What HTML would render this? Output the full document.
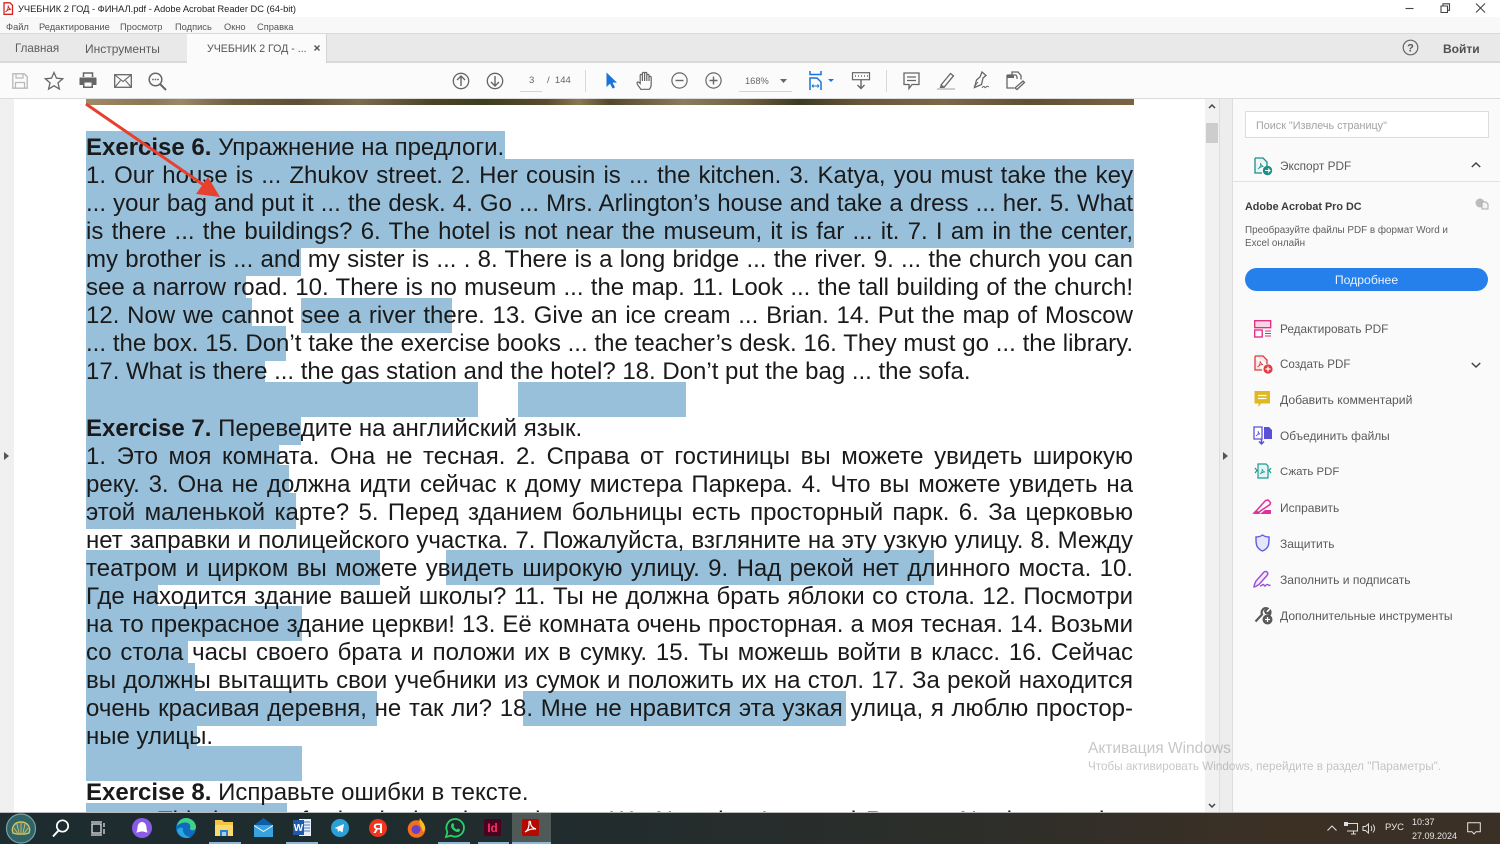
<!DOCTYPE html>
<html lang="ru"><head><meta charset="utf-8"><title>Acrobat Reader</title>
<style>
html,body{margin:0;padding:0;width:1500px;height:844px;overflow:hidden;background:#fff;font-family:"Liberation Sans","Noto Sans CJK SC",sans-serif}
.a{position:absolute}
.t{position:absolute;white-space:nowrap;line-height:14px;height:14px}
.h{position:absolute;background:#99c0db}
.l{position:absolute;left:86px;width:1047px;height:28px;line-height:28px;font-size:24px;color:#1a1a1a;font-family:"Liberation Sans",Arial,sans-serif;text-align:justify;text-align-last:justify;overflow:visible}
.n{text-align:left;text-align-last:left;white-space:nowrap}
svg{position:absolute;overflow:visible}
.m{font-size:9.3px;color:#555;top:20px}
.tool{font-size:12px;color:#5a5a5a;left:1280px}
</style></head><body>

<!-- title bar -->
<div class="a" style="left:0;top:0;width:1500px;height:17px;background:#fff"></div>
<svg style="left:2px;top:2px" width="12" height="13" viewBox="0 0 12 13"><path d="M2 .8h6l2.500 2.500v9H2z" fill="#fff" stroke="#d6231e" stroke-width="1.300"/><path d="M3.500 10c2-1 3-4 2.600-6.500 .5 2.500 1.500 3.500 3 4-2-.2-4 .6-5.600 2.500z" fill="none" stroke="#d6231e" stroke-width=".9"/></svg>
<div class="t" style="left:18px;top:2px;font-size:9.300px;color:#222">УЧЕБНИК 2 ГОД - ФИНАЛ.pdf - Adobe Acrobat Reader DC (64-bit)</div>
<svg style="left:1400px;top:0" width="100" height="17" viewBox="0 0 100 17"><path d="M5.500 8.500h8" stroke="#444" stroke-width="1.100"/><path d="M41 6h6.500v6.500H41zM43 6V3.800h6.500v6.500H47.500" fill="none" stroke="#444" stroke-width="1.100"/><path d="M76 3.500l9 9M85 3.500l-9 9" stroke="#444" stroke-width="1.100"/></svg>

<!-- menu -->
<div class="a" style="left:0;top:17px;width:1500px;height:16px;background:#f8f8f8"></div>
<div class="t m" style="left:6px">Файл</div>
<div class="t m" style="left:39px">Редактирование</div>
<div class="t m" style="left:120px">Просмотр</div>
<div class="t m" style="left:175px">Подпись</div>
<div class="t m" style="left:224px">Окно</div>
<div class="t m" style="left:257px">Справка</div>

<!-- tab bar -->
<div class="a" style="left:0;top:33px;width:1500px;height:29px;background:#e9e9e9;border-top:1px solid #dadada;box-sizing:border-box"></div>
<div class="a" style="left:0;top:61px;width:1500px;height:2px;background:#d9d9d9"></div>
<div class="a" style="left:187px;top:34px;width:140px;height:29px;background:#fbfbfb;border-right:1px solid #d4d4d4;box-sizing:border-box"></div>
<div class="t" style="left:15px;top:42px;font-size:11.600px;color:#5c5c5c">Главная</div>
<div class="t" style="left:85px;top:42px;font-size:12px;color:#5c5c5c">Инструменты</div>
<div class="t" style="left:207px;top:42px;font-size:10.600px;color:#555">УЧЕБНИК 2 ГОД - ...</div>
<svg style="left:314px;top:45px" width="6" height="6"><path d="M.5.500l5 5M5.500.500l-5 5" stroke="#555" stroke-width="1.400"/></svg>
<svg style="left:1402px;top:39px" width="17" height="17" viewBox="0 0 17 17"><circle cx="8.500" cy="8.500" r="7.300" fill="none" stroke="#666" stroke-width="1.200"/><text x="8.500" y="12.500" font-size="11" font-family="Liberation Sans" text-anchor="middle" fill="#555" font-weight="bold">?</text></svg>
<div class="t" style="left:1443px;top:42px;font-size:12px;font-weight:bold;color:#505050">Войти</div>

<!-- toolbar -->
<div class="a" style="left:0;top:63px;width:1500px;height:35px;background:#fbfbfb"></div>
<div class="a" style="left:0;top:98px;width:1500px;height:1px;background:#dcdcdc"></div>

<svg style="left:12px;top:73px" width="16" height="16" viewBox="0 0 16 16"><path d="M.8.800h11.500l2.900 2.900v11.500H.8z" fill="none" stroke="#b8b8b8" stroke-width="1.300"/><path d="M4 1v4h7V1M3.500 15V9.500h9V15" fill="none" stroke="#b8b8b8" stroke-width="1.200"/></svg>
<svg style="left:44px;top:71px" width="20" height="19" viewBox="0 0 20 19"><path d="M10 1.500l2.500 5.700 6.200.6-4.700 4.100 1.400 6.100L10 14.800l-5.400 3.200L6 11.900 1.300 7.800l6.200-.6z" fill="none" stroke="#666" stroke-width="1.300"/></svg>
<svg style="left:79px;top:72px" width="18" height="17" viewBox="0 0 18 17"><path d="M4.500 5V1h9v4" fill="none" stroke="#666" stroke-width="1.500"/><path d="M1 5.500h16a.8.800 0 0 1 .5.800v6.700h-3.500v3H4v-3H.5V6.300A.8.800 0 0 1 1 5.500z" fill="#666"/><rect x="5.500" y="10.500" width="7" height="4" fill="#fbfbfb"/></svg>
<svg style="left:114px;top:74px" width="18" height="14" viewBox="0 0 18 14"><rect x=".7" y=".7" width="16.600" height="12.600" fill="none" stroke="#666" stroke-width="1.300"/><path d="M1 1l8 6.500L17 1M1 13l5.500-6.500M17 13l-5.500-6.500" fill="none" stroke="#666" stroke-width="1.100"/></svg>
<svg style="left:148px;top:72px" width="19" height="19" viewBox="0 0 19 19"><circle cx="7.500" cy="7.500" r="6.300" fill="none" stroke="#666" stroke-width="1.500"/><path d="M12 12l6 6" stroke="#666" stroke-width="2"/><circle cx="5" cy="7.500" r=".9" fill="#666"/><circle cx="7.500" cy="7.500" r=".9" fill="#666"/><circle cx="10" cy="7.500" r=".9" fill="#666"/></svg>

<svg style="left:452px;top:72px" width="18" height="18" viewBox="0 0 18 18"><circle cx="9" cy="9" r="7.700" fill="none" stroke="#666" stroke-width="1.300"/><path d="M9 14V4.500M5 8l4-4 4 4" fill="none" stroke="#666" stroke-width="1.400"/></svg>
<svg style="left:486px;top:72px" width="18" height="18" viewBox="0 0 18 18"><circle cx="9" cy="9" r="7.700" fill="none" stroke="#666" stroke-width="1.300"/><path d="M9 4v9.500M5 10l4 4 4-4" fill="none" stroke="#666" stroke-width="1.400"/></svg>
<div class="t" style="left:529px;top:74px;font-size:9.500px;color:#666">3</div>
<div class="a" style="left:520px;top:91px;width:22px;height:1px;background:#d4d4d4"></div>
<div class="t" style="left:547px;top:74px;font-size:9.500px;color:#666">/&nbsp; 144</div>
<div class="a" style="left:585px;top:70px;width:1px;height:22px;background:#d8d8d8"></div>
<svg style="left:605px;top:72px" width="13" height="17" viewBox="0 0 13 17"><path d="M1.500.500v14.500l3.500-3.400 2.600 5 2.400-1.200-2.500-4.800H12z" fill="#1a73d9"/></svg>
<svg style="left:636px;top:71px" width="19" height="20" viewBox="0 0 19 20"><path d="M4.800 18.300c-1.200-2-3.800-4.700-3.800-6.300 0-1.500 1.700-1.300 3.200 .4V4.500a1.100 1.100 0 0 1 2.200 0V2.500a1.100 1.100 0 0 1 2.200 0v0a1.100 1.100 0 0 1 2.200 0v2a1.100 1.100 0 0 1 2.200 0v2a1.100 1.100 0 0 1 2.200 0v7c0 2-.9 3.700-1.800 4.800zM6.400 4v6M8.600 2.500V10M10.800 2.800V10M13 4.800V10" fill="none" stroke="#666" stroke-width="1.200"/></svg>
<svg style="left:671px;top:72px" width="17" height="17" viewBox="0 0 17 17"><circle cx="8.500" cy="8.500" r="7.600" fill="none" stroke="#666" stroke-width="1.200"/><path d="M4.500 8.500h8" stroke="#666" stroke-width="1.400"/></svg>
<svg style="left:705px;top:72px" width="17" height="17" viewBox="0 0 17 17"><circle cx="8.500" cy="8.500" r="7.600" fill="none" stroke="#666" stroke-width="1.200"/><path d="M4.500 8.500h8M8.500 4.500v8" stroke="#666" stroke-width="1.400"/></svg>
<div class="t" style="left:745px;top:74px;font-size:9.300px;color:#666">168%</div>
<svg style="left:780px;top:79px" width="7" height="4"><path d="M0 0h7L3.500 4z" fill="#666"/></svg>
<div class="a" style="left:739px;top:91px;width:53px;height:1px;background:#d4d4d4"></div>
<svg style="left:809px;top:71px" width="26" height="20" viewBox="0 0 26 20"><path d="M1 0v3.500h11V0M1 19V7h7l4 4v8" fill="none" stroke="#1a73d9" stroke-width="1.500"/><path d="M3 15h7M3 15l1.500-1.500M3 15l1.500 1.500M10 15l-1.500-1.500M10 15l-1.500 1.500" stroke="#1a73d9" stroke-width=".9" fill="none"/><path d="M19 8h6l-3 3z" fill="#1a73d9"/></svg>
<svg style="left:852px;top:72px" width="18" height="18" viewBox="0 0 18 18"><rect x=".5" y=".7" width="17" height="7" fill="none" stroke="#666" stroke-width="1.200"/><path d="M3 4h1M6 4h1M9 4h1M12 4h1M15 4h1" stroke="#666" stroke-width="1.400"/><path d="M9 8v8.500M5.500 13l3.500 3.500 3.500-3.500" fill="none" stroke="#666" stroke-width="1.400"/></svg>
<div class="a" style="left:886px;top:70px;width:1px;height:22px;background:#d8d8d8"></div>
<svg style="left:903px;top:72px" width="17" height="18" viewBox="0 0 17 18"><path d="M1 1h15v11.500H9l-3 4v-4H1z" fill="none" stroke="#666" stroke-width="1.300"/><path d="M4 5h9M4 8.500h9" stroke="#666" stroke-width="1.200"/></svg>
<svg style="left:937px;top:72px" width="18" height="18" viewBox="0 0 18 18"><path d="M4 13L13.500 1.500l3 2.300L7 15.300z" fill="none" stroke="#666" stroke-width="1.300"/><path d="M4 13l-1.500 3h4z" fill="#666"/><rect x="0" y="16" width="18" height="2" fill="#ccc"/></svg>
<svg style="left:971px;top:71px" width="19" height="19" viewBox="0 0 19 19"><path d="M11 1l4 3.500-3 2.500 -1.500 6.500-7 3 2-7.500L9 6z" fill="none" stroke="#666" stroke-width="1.300"/><path d="M3 16l4-5" stroke="#666"/><path d="M11 17c1-2 2-2 2.500-1s1 1 1.500 0 1.500-1 3 0" fill="none" stroke="#666"/></svg>
<svg style="left:1006px;top:71px" width="19" height="19" viewBox="0 0 19 19"><path d="M6 4V1h6l3 3.500v4M1 4h9l1 2v2M1 4v13h7" fill="none" stroke="#666" stroke-width="1.300"/><path d="M1 4h7v3H1z" fill="#666"/><path d="M9 17l8-7 1.500 1.500-7.500 7z" fill="none" stroke="#666" stroke-width="1.300"/></svg>

<!-- side gutters -->
<div class="a" style="left:0;top:99px;width:14px;height:714px;background:#f0f0f0"></div>
<svg style="left:4px;top:452px" width="5" height="8"><path d="M0 0l5 4-5 4z" fill="#555"/></svg>
<div class="a" style="left:14px;top:99px;width:1191px;height:714px;background:#fff"></div>

<!-- page image strip -->
<div class="a" style="left:86px;top:99px;width:1048px;height:5.500px;background:linear-gradient(90deg,#a08b68 0,#8a7553 6%,#9a8866 9%,#6e5f3f 14%,#5c4f35 20%,#7b6c4e 26%,#4d4427 33%,#3f3c1f 38%,#5a4c2d 44%,#8a7a52 47%,#54482c 50%,#8a7d5c 57%,#6e5f40 63%,#3d3a22 68%,#685738 74%,#7b6847 82%,#5e5030 90%,#7c6443 100%)"></div>

<!-- highlights -->
<div class="h" style="left:86px;top:131px;width:419px;height:28px"></div>
<div class="h" style="left:86px;top:159px;width:1047.500px;height:88.700px"></div>
<div class="h" style="left:86px;top:247px;width:215px;height:29px"></div>
<div class="h" style="left:86px;top:275.700px;width:159.500px;height:23px"></div>
<div class="h" style="left:86px;top:298px;width:166.400px;height:28px"></div>
<div class="h" style="left:301.400px;top:298.300px;width:151px;height:35px"></div>
<div class="h" style="left:86px;top:325.700px;width:200.300px;height:35px"></div>
<div class="h" style="left:86px;top:360.700px;width:179px;height:22px"></div>
<div class="h" style="left:86px;top:382px;width:392px;height:35px"></div>
<div class="h" style="left:518px;top:382px;width:167.500px;height:35px"></div>
<div class="h" style="left:86px;top:416.700px;width:214.600px;height:28.500px"></div>
<div class="h" style="left:86px;top:445px;width:193px;height:20.500px"></div>
<div class="h" style="left:86px;top:465px;width:203px;height:28.500px"></div>
<div class="h" style="left:86px;top:493px;width:210px;height:36px"></div>
<div class="h" style="left:86px;top:550px;width:294px;height:35px"></div>
<div class="h" style="left:446px;top:550px;width:488px;height:35px"></div>
<div class="h" style="left:86px;top:585px;width:72px;height:21px"></div>
<div class="h" style="left:86px;top:606px;width:215.700px;height:35px"></div>
<div class="h" style="left:86px;top:641px;width:101.700px;height:22px"></div>
<div class="h" style="left:86px;top:662.700px;width:109px;height:28.500px"></div>
<div class="h" style="left:86px;top:691px;width:290.700px;height:35px"></div>
<div class="h" style="left:523px;top:691px;width:323px;height:35px"></div>
<div class="h" style="left:86px;top:726px;width:110.700px;height:20.500px"></div>
<div class="h" style="left:86px;top:746px;width:215.700px;height:35px"></div>
<div class="h" style="left:86px;top:803px;width:201px;height:10px"></div>

<!-- document text -->
<div class="l n" style="top:134px"><b>Exercise 6.</b> Упражнение на предлоги.</div>
<div class="l" style="top:162px">1. Our house is ... Zhukov street. 2. Her cousin is ... the kitchen. 3. Katya, you must take the key</div>
<div class="l" style="top:190px">... your bag and put it ... the desk. 4. Go ... Mrs. Arlington’s house and take a dress ... her. 5. What</div>
<div class="l" style="top:218px">is there ... the buildings? 6. The hotel is not near the museum, it is far ... it. 7. I am in the center,</div>
<div class="l" style="top:246px">my brother is ... and my sister is ... . 8. There is a long bridge ... the river. 9. ... the church you can</div>
<div class="l" style="top:274px">see a narrow road. 10. There is no museum ... the map. 11. Look ... the tall building of the church!</div>
<div class="l" style="top:302px">12. Now we cannot see a river there. 13. Give an ice cream ... Brian. 14. Put the map of Moscow</div>
<div class="l" style="top:330px">... the box. 15. Don’t take the exercise books ... the teacher’s desk. 16. They must go ... the library.</div>
<div class="l n" style="top:358px">17. What is there ... the gas station and the hotel? 18. Don’t put the bag ... the sofa.</div>
<div class="l n" style="top:414.500px"><b>Exercise 7.</b> Переведите на английский язык.</div>
<div class="l" style="top:443px">1. Это моя комната. Она не тесная. 2. Справа от гостиницы вы можете увидеть широкую</div>
<div class="l" style="top:471px">реку. 3. Она не должна идти сейчас к дому мистера Паркера. 4. Что вы можете увидеть на</div>
<div class="l" style="top:499px">этой маленькой карте? 5. Перед зданием больницы есть просторный парк. 6. За церковью</div>
<div class="l" style="top:527px">нет заправки и полицейского участка. 7. Пожалуйста, взгляните на эту узкую улицу. 8. Между</div>
<div class="l" style="top:555px">театром и цирком вы можете увидеть широкую улицу. 9. Над рекой нет длинного моста. 10.</div>
<div class="l" style="top:583px">Где находится здание вашей школы? 11. Ты не должна брать яблоки со стола. 12. Посмотри</div>
<div class="l" style="top:611px">на то прекрасное здание церкви! 13. Её комната очень просторная. а моя тесная. 14. Возьми</div>
<div class="l" style="top:639px">со стола часы своего брата и положи их в сумку. 15. Ты можешь войти в класс. 16. Сейчас</div>
<div class="l" style="top:667px">вы должны вытащить свои учебники из сумок и положить их на стол. 17. За рекой находится</div>
<div class="l" style="top:695px">очень красивая деревня, не так ли? 18. Мне не нравится эта узкая улица, я люблю простор-</div>
<div class="l n" style="top:723px">ные улицы.</div>
<div class="l n" style="top:779px"><b>Exercise 8.</b> Исправьте ошибки в тексте.</div>
<div class="l n" style="top:807px;left:158px;width:980px;overflow:hidden;height:6px;word-spacing:3px">This house of mine is the nicest picture. We Natasha, Ivan and Roman. Not here and</div>

<!-- red arrow -->
<svg style="left:0;top:0" width="300" height="220"><path d="M86 104L208 188" stroke="#e8402f" stroke-width="3"/><path d="M220 197L196 194L208 177z" fill="#e8402f"/></svg>

<!-- scrollbars -->
<div class="a" style="left:1205px;top:99px;width:14px;height:714px;background:#f1f1f1"></div>
<svg style="left:1208px;top:103px" width="8" height="6"><path d="M1 5l3-3 3 3" fill="none" stroke="#444" stroke-width="1.500"/></svg>
<div class="a" style="left:1206px;top:123px;width:12px;height:20px;background:#cdcdcd"></div>
<svg style="left:1208px;top:803px" width="8" height="6"><path d="M1 1l3 3 3-3" fill="none" stroke="#444" stroke-width="1.500"/></svg>
<div class="a" style="left:1219px;top:99px;width:14px;height:714px;background:#ededed;border-left:1px solid #dedede;border-right:1px solid #dedede;box-sizing:border-box"></div>
<svg style="left:1223px;top:452px" width="5" height="8"><path d="M0 0l5 4-5 4z" fill="#555"/></svg>

<!-- right panel -->
<div class="a" style="left:1233px;top:99px;width:267px;height:714px;background:#fafafa"></div>
<div class="a" style="left:1245px;top:111px;width:244px;height:27px;background:#fff;border:1px solid #dcdcdc;box-sizing:border-box"></div>
<div class="t" style="left:1256px;top:119px;font-size:10.800px;color:#a3a3a3">Поиск "Извлечь страницу"</div>

<svg style="left:1254px;top:157px" width="19" height="19" viewBox="0 0 19 19"><path d="M1 1h8l4 4v5M1 1v15h7" fill="#eaf5f3" stroke="#1c8f86" stroke-width="1.300"/><path d="M4 12c2-1 3-4 2.500-6 .5 2 1.500 3 3 3.500-2 0-4 1-5.500 2.500z" fill="none" stroke="#1c8f86" stroke-width=".8"/><circle cx="13.500" cy="13.500" r="4.700" fill="#1c8f86"/><path d="M11 13.500h5M14 11.500l2 2-2 2" fill="none" stroke="#fff" stroke-width="1.100"/></svg>
<div class="t" style="left:1280px;top:159px;font-size:11.800px;color:#5a5a5a">Экспорт PDF</div>
<svg style="left:1471px;top:162px" width="10" height="6"><path d="M.8 5L5 1l4.200 4" fill="none" stroke="#444" stroke-width="1.500"/></svg>
<div class="a" style="left:1233px;top:181px;width:267px;height:1px;background:#e2e2e2"></div>
<div class="t" style="left:1245px;top:200px;font-size:10.800px;font-weight:bold;color:#3c3c3c">Adobe Acrobat Pro DC</div>
<svg style="left:1475px;top:198px" width="14" height="12" viewBox="0 0 14 12"><circle cx="5" cy="5" r="4.500" fill="#bcbcbc"/><path d="M7 4h4l2 2v5H7z" fill="#f4f4f4" stroke="#a9a9a9"/></svg>
<div class="t" style="left:1245px;top:224px;font-size:9.900px;color:#5f5f5f">Преобразуйте файлы PDF в формат Word и</div>
<div class="t" style="left:1245px;top:237px;font-size:9.900px;color:#5f5f5f">Excel онлайн</div>
<div class="a" style="left:1245px;top:268px;width:243px;height:23px;border-radius:12px;background:#2680eb"></div>
<div class="t" style="left:1245px;top:273px;width:243px;text-align:center;font-size:12.200px;color:#eaf3fd">Подробнее</div>

<svg style="left:1254px;top:320px" width="18" height="18" viewBox="0 0 18 18"><rect x=".7" y=".7" width="16" height="7" fill="#f7d5e3" stroke="#e0267f" stroke-width="1.300"/><rect x=".7" y="10" width="7.500" height="7" fill="none" stroke="#e0267f" stroke-width="1.300"/><path d="M11 11h6M11 13.500h6M11 16h6" stroke="#e0267f"/></svg>
<div class="t tool" style="top:322px;font-size:11.800px">Редактировать PDF</div>

<svg style="left:1254px;top:355px" width="19" height="19" viewBox="0 0 19 19"><path d="M1 1h8l4 4v4M1 1v14h7" fill="#fbe6e6" stroke="#e0393e" stroke-width="1.300"/><path d="M3.500 12c2-1 3-4 2.500-6 .5 2 1.500 3 3 3.500-2 0-4 1-5.500 2.500z" fill="none" stroke="#e0393e" stroke-width=".8"/><circle cx="14" cy="14" r="4.600" fill="#e0393e"/><path d="M11.500 14h5M14 11.500v5" stroke="#fff" stroke-width="1.200"/></svg>
<div class="t tool" style="top:358px;font-size:11.600px">Создать PDF</div>
<svg style="left:1471px;top:362px" width="10" height="6"><path d="M.8 1L5 5l4.200-4" fill="none" stroke="#444" stroke-width="1.500"/></svg>

<svg style="left:1254px;top:391px" width="17" height="17" viewBox="0 0 17 17"><path d="M.5 0h15.500v12.500H7L4.500 16v-3.500H.5z" fill="#e0b81f"/><path d="M4 4.500h8.500M4 7.500h8.500" stroke="#fff" stroke-width="1.200"/></svg>
<div class="t tool" style="top:393px;font-size:12.200px">Добавить комментарий</div>

<svg style="left:1253px;top:426px" width="20" height="19" viewBox="0 0 20 19"><path d="M1 1h8v12H1z" fill="#fff" stroke="#5a50d8" stroke-width="1.300"/><path d="M11 1h5l3 3v9h-8z" fill="#5a50d8"/><path d="M3 10c2-1 2.500-3 2-5 .5 1.500 1 2.500 2 3-1.500 0-3 .8-4 2z" fill="none" stroke="#5a50d8" stroke-width=".7"/><path d="M8.500 13v5M6 15.500l2.500 2.500 2.500-2.500" fill="none" stroke="#5a50d8" stroke-width="1.500"/></svg>
<div class="t tool" style="top:429px;font-size:11.900px">Объединить файлы</div>

<svg style="left:1254px;top:463px" width="18" height="16" viewBox="0 0 18 16"><path d="M4 1h8l2 2v12H4z" fill="#e6f5f3" stroke="#1c9a90" stroke-width="1.200"/><path d="M6 11c1.500-1 2.500-3 2-5 .5 1.500 1.500 2.500 3 3-2 0-3.500 .8-5 2z" fill="none" stroke="#1c9a90" stroke-width=".8"/><path d="M1 5l2 2.500L1 10M17 5l-2 2.500 2 2.500" fill="none" stroke="#1c9a90" stroke-width="1.200"/></svg>
<div class="t tool" style="top:465px;font-size:11.400px">Сжать PDF</div>

<svg style="left:1254px;top:499px" width="18" height="15" viewBox="0 0 18 15"><path d="M0 14l3-3L11.500 1.500 14 1l2.500 2.500-.5 2L7 11.500 4 14z" fill="none" stroke="#e0309a" stroke-width="1.500"/><path d="M0 15l2.500-4 3.500 3-.5 1zM6 15l5-4h6v4z" fill="#e0309a"/></svg>
<div class="t tool" style="top:501px">Исправить</div>

<svg style="left:1255px;top:534px" width="15" height="18" viewBox="0 0 15 18"><path d="M7.500 1C5.500 2.500 3.500 3 1 3c0 6-.5 11 6.500 14C14.500 14 14 9 14 3c-2.500 0-4.500-.5-6.500-2z" fill="#e6e6fb" stroke="#5c5ce0" stroke-width="1.400"/></svg>
<div class="t tool" style="top:537px">Защитить</div>

<svg style="left:1253px;top:570px" width="19" height="18" viewBox="0 0 19 18"><path d="M1 17c0-2 1-4 2-6l8-9c1-1 3-.5 3.500 .5s.5 2-.5 3L6 14.500c-1.500 1-3 2-5 2.500z" fill="#f1e6fb" stroke="#9a4fd9" stroke-width="1.400"/><path d="M7 16c2 0 2.500-2 3.500-1.500s.5 2 1.500 1.500 1.500-2 2.500-1.500 1 1.500 3 .5" fill="none" stroke="#9a4fd9" stroke-width="1.400"/></svg>
<div class="t tool" style="top:573px;font-size:12.100px">Заполнить и подписать</div>

<svg style="left:1254px;top:606px" width="19" height="19" viewBox="0 0 19 19"><path d="M1.500 15.500L8 8.500C7 6 8 3.500 10 2.500c1-.5 2.500-.5 3.500 0L11 5l1 2 2.300.3 2-2.200c.5 1.500 0 3.500-1.500 4.300" fill="none" stroke="#5a5a5a" stroke-width="2.200"/><circle cx="13.500" cy="13.500" r="5" fill="#5a5a5a"/><path d="M11 13.500h5M13.500 11v5" stroke="#fff" stroke-width="1.200"/></svg>
<div class="t tool" style="top:609px;font-size:12.100px">Дополнительные инструменты</div>

<!-- activation watermark -->
<div class="t" style="left:1088px;top:741px;font-size:15.500px;line-height:16px;height:16px;color:rgba(120,120,120,.42)">Активация Windows</div>
<div class="t" style="left:1088px;top:760px;font-size:11.700px;color:rgba(120,120,120,.42)">Чтобы активировать Windows, перейдите в раздел "Параметры".</div>

<!-- taskbar -->
<div class="a" style="left:0;top:812px;width:1500px;height:1px;background:#b9b9b9"></div>
<div class="a" style="left:0;top:813px;width:1500px;height:31px;background:linear-gradient(90deg,#1d2c2f 0,#202c2e 35%,#2d2e2a 65%,#3c3025 85%,#3a3026 100%)"></div>
<div class="a" style="left:512px;top:813px;width:39px;height:31px;background:#4f5958"></div>
<div class="a" style="left:209px;top:842px;width:32px;height:2px;background:#8fb8d6"></div>
<div class="a" style="left:286px;top:842px;width:32px;height:2px;background:#8fb8d6"></div>
<div class="a" style="left:438px;top:842px;width:32px;height:2px;background:#8fb8d6"></div>
<div class="a" style="left:478px;top:842px;width:31px;height:2px;background:#8fb8d6"></div>
<div class="a" style="left:512px;top:842px;width:39px;height:2px;background:#8fb8d6"></div>

<svg style="left:5px;top:813px" width="32" height="31" viewBox="0 0 32 31"><circle cx="16" cy="15.500" r="14.500" fill="#2f6466" stroke="#7d9fa5" stroke-width="1.200"/><path d="M8 20c-2-5 1-11 8-11s10 6 8 11l-4 1H12z" fill="#3d7a78" stroke="#d9bf5e" stroke-width="1.400"/><path d="M16 10v10M12 11l2 9M20 11l-2 9M9 15l3.500 5M23 15l-3.500 5" stroke="#d9bf5e" stroke-width=".9"/></svg>
<svg style="left:52px;top:819px" width="18" height="19" viewBox="0 0 18 19"><circle cx="10.500" cy="7" r="5.700" fill="none" stroke="#fff" stroke-width="1.700"/><path d="M6.500 11.500L1 17.500" stroke="#fff" stroke-width="2"/></svg>
<svg style="left:91px;top:821px" width="15" height="15" viewBox="0 0 15 15"><rect x="1" y="3" width="9" height="9" fill="none" stroke="#ddd" stroke-width="1.300"/><path d="M0 1h11M0 14h11M13 2v4M13 8v5" stroke="#ddd" stroke-width="1.300"/></svg>
<svg style="left:132px;top:818px" width="20" height="20" viewBox="0 0 20 20"><circle cx="10" cy="10" r="10" fill="#8a5ce6"/><path d="M10 4c-3 0-4.500 3-4.500 6 0 2-1 3-1 4.500 2 0 3-1 5.500-1s3.500 1 5.500 1c0-1.500-1-2.500-1-4.500 0-3-1.500-6-4.500-6z" fill="#fff"/></svg>
<svg style="left:176px;top:818px" width="20" height="20" viewBox="0 0 20 20"><circle cx="10" cy="10" r="10" fill="#0f6cbd"/><path d="M1 8C2 3 6 0 10 0c5 0 10 4 10 9 0 3-3 4-5 3-2-1 0-3-1-5-1-3-8-4-13 1z" fill="#3fd08a"/><path d="M7 10c-1 5 3 9 8 9-6 3-13-1-14-7 1-2 4-3 6-2z" fill="#2aa7e0"/></svg>
<svg style="left:215px;top:819px" width="18" height="18" viewBox="0 0 18 18"><path d="M0 1h7l2 2h9v14H0z" fill="#f4c542"/><path d="M0 6h18v11H0z" fill="#fbd970"/><rect x="5" y="11" width="8" height="6" fill="#2a7fc9"/><rect x="7" y="13" width="4" height="4" fill="#9fd0ee"/></svg>
<svg style="left:254px;top:818px" width="19" height="19" viewBox="0 0 19 19"><path d="M9.500 0L19 7v1H0V7z" fill="#0d5ea8"/><rect x="0" y="7" width="19" height="12" fill="#38a3e0"/><path d="M0 7l9.500 6L19 7v1l-9.500 6L0 8z" fill="#fff"/></svg>
<svg style="left:293px;top:819px" width="18" height="17" viewBox="0 0 18 17"><rect x="6" y="0" width="12" height="17" fill="#e7eef7"/><path d="M11 3h6M11 6h6M11 9h6M11 12h6" stroke="#4a7ec0"/><rect x="0" y="1" width="11" height="15" fill="#1f5aa8"/><text x="5.500" y="12" font-size="10" font-weight="bold" fill="#fff" text-anchor="middle" font-family="Liberation Sans">W</text></svg>
<svg style="left:331px;top:819px" width="18" height="18" viewBox="0 0 18 18"><circle cx="9" cy="9" r="9" fill="#2a9fd8"/><path d="M3.500 9L13 5l-1.500 8.500-3-2-1.500 1.500-.5-3z" fill="#fff"/></svg>
<svg style="left:369px;top:819px" width="18" height="18" viewBox="0 0 18 18"><circle cx="9" cy="9" r="9" fill="#f0361d"/><text x="9" y="14" font-size="13.500" font-weight="bold" fill="#fff" text-anchor="middle" font-family="Liberation Sans">Я</text></svg>
<svg style="left:407px;top:817px" width="19" height="21" viewBox="0 0 19 21"><circle cx="9.500" cy="12" r="8.800" fill="#f0701f"/><path d="M13 1c1 3 5 5 5 10 0 2-1 3-2 4-1-6-5-7-3-14z" fill="#fbbf24"/><circle cx="9" cy="12.500" r="4.500" fill="#6a3fc9"/></svg>
<svg style="left:445px;top:818px" width="20" height="20" viewBox="0 0 20 20"><path d="M1 19l1.400-5A8.800 8.800 0 1 1 6 17.600z" fill="#1f2b2b" stroke="#25d366" stroke-width="1.800"/><path d="M6.500 6c1-1.500 2-1 2.500 .5s-.5 1.500-.5 2c.5 1 1.500 2 3 3 .5 0 1-1 1.500-1l2 1c.5 1-1 3-3 2.500-3-.5-6-4-6-6z" fill="#25d366"/></svg>
<svg style="left:484px;top:819px" width="17" height="17" viewBox="0 0 17 17"><rect width="17" height="17" rx="2" fill="#49021f"/><text x="8.500" y="13" font-size="11.500" font-weight="bold" fill="#ff3366" text-anchor="middle" font-family="Liberation Sans">Id</text></svg>
<svg style="left:522px;top:819px" width="17" height="17" viewBox="0 0 17 17"><rect width="17" height="17" rx="2" fill="#b30b00"/><path d="M3 13c3-1.500 4.500-6 4-9.500-.3-1.500 1.500-1.500 1.500 0 0 3 2 5.500 5.500 6.500-3.500-.5-7.500 .5-11 3z" fill="none" stroke="#fff" stroke-width="1.200"/></svg>

<svg style="left:1327px;top:825px" width="10" height="6"><path d="M.5 5.500L5 1l4.500 4.500" fill="none" stroke="#ddd" stroke-width="1.100"/></svg>
<svg style="left:1344px;top:822px" width="14" height="13" viewBox="0 0 14 13"><path d="M3 1.500h10.500v7.500H3M7 12h5M9.500 9v3" fill="none" stroke="#ddd"/><rect x="0" y="0" width="4" height="4" fill="#ddd"/></svg>
<svg style="left:1362px;top:823px" width="14" height="11" viewBox="0 0 14 11"><path d="M1 3.500h2.500L6.500 1v9L3.500 7.500H1zM9 3c1 1.500 1 3.500 0 5M11 1.500c2 2.500 2 5.500 0 8" fill="none" stroke="#ddd"/></svg>
<div class="t" style="left:1385px;top:821px;font-size:9.500px;color:#e6e6e6">РУС</div>
<div class="t" style="left:1412px;top:815px;width:20px;text-align:center;font-size:9px;color:#e6e6e6">10:37</div>
<div class="t" style="left:1412px;top:829px;font-size:9px;color:#e6e6e6">27.09.2024</div>
<svg style="left:1467px;top:822px" width="14" height="13" viewBox="0 0 14 13"><path d="M.7.700h12.600v9H9L7 12 5 9.700H.7z" fill="none" stroke="#e6e6e6"/></svg>
</body></html>
